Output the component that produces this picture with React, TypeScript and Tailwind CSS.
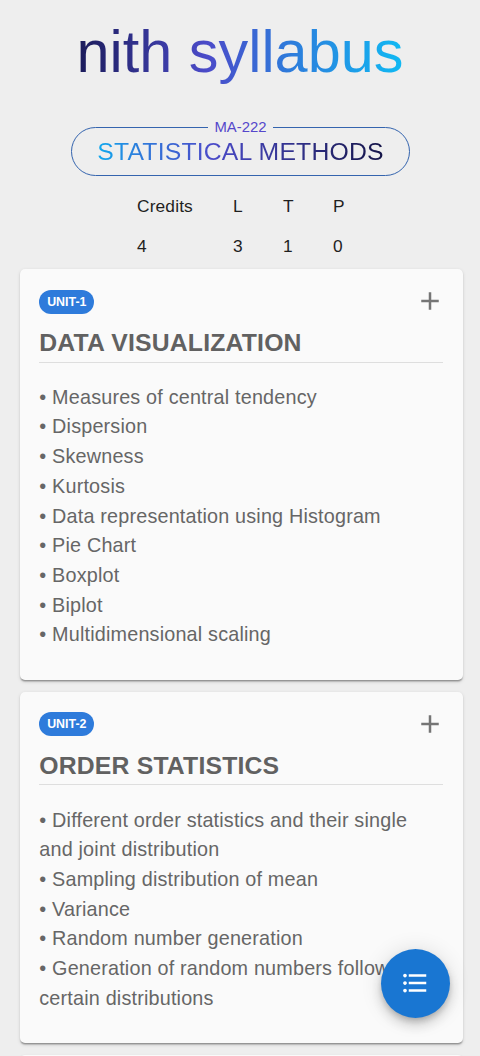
import React from "react";

type Unit = { label: string; title: string; topics: string[] };

const units: Unit[] = [
  {
    label: "UNIT-1",
    title: "DATA VISUALIZATION",
    topics: [
      "Measures of central tendency",
      "Dispersion",
      "Skewness",
      "Kurtosis",
      "Data representation using Histogram",
      "Pie Chart",
      "Boxplot",
      "Biplot",
      "Multidimensional scaling",
    ],
  },
  {
    label: "UNIT-2",
    title: "ORDER STATISTICS",
    topics: [
      "Different order statistics and their single and joint distribution",
      "Sampling distribution of mean",
      "Variance",
      "Random number generation",
      "Generation of random numbers following certain distributions",
    ],
  },
];

const credits = [
  ["Credits", "4", "w-[96px]"],
  ["L", "3", "w-[50px]"],
  ["T", "1", "w-[50px]"],
  ["P", "0", "w-[20px]"],
];

function UnitCard({ unit }: { unit: Unit }) {
  return (
    <section className="rounded-[5px] bg-[#fafafa] pr-[20px] pl-[19.3px] pt-[20px] pb-[29.7px] shadow-[0_2px_1px_-1.2px_rgba(0,0,0,0.2),0_1.2px_1.2px_0_rgba(0,0,0,0.14),0_1.2px_3.7px_0_rgba(0,0,0,0.12)]">
      <div className="flex h-[25px] items-center justify-between">
        <span className="flex h-[24px] w-[55px] items-center justify-center rounded-full bg-[#2e7bdb] pt-px text-[12.4px] font-bold text-white">
          {unit.label}
        </span>
        <svg viewBox="0 0 24 24" className="mt-[-1px] mr-[-2px] h-[30px] w-[30px] fill-[#757575]">
          <path d="M19 13h-6v6h-2v-6H5v-2h6V5h2v6h6v2z" />
        </svg>
      </div>
      <h2 className="mt-[8px] h-[40.6px] border-b border-[#dedede] text-[24.75px] leading-[41px] font-bold tracking-[0.19px] whitespace-nowrap text-[#616161]">
        {unit.title}
      </h2>
      <ul className="mt-[20.2px] text-[19.8px] leading-[29.7px] tracking-[0.186px] text-[#666666]">
        {unit.topics.map((topic) => (
          <li key={topic}>{`• ${topic}`}</li>
        ))}
      </ul>
    </section>
  );
}

export default function App() {
  return (
    <div className="h-[1056px] overflow-hidden bg-[#eeeeee] font-['Liberation_Sans',Arial,sans-serif]">
      <header className="flex h-[127px] justify-center pt-[17px]">
        <h1 className="h-[70px] bg-[linear-gradient(90deg,#1b1b5a,#4b4bc9_40%,#2e7bdb_65%,#10b9f3)] bg-clip-text text-[59.4px] leading-[70px] whitespace-nowrap text-transparent">
          nith syllabus
        </h1>
      </header>
      <fieldset className="relative ml-[71px] flex h-[49px] w-[339px] items-center justify-center rounded-full border border-[#3464ae]">
        <span className="absolute -top-[11px] left-[136px] bg-[#eeeeee] px-[6.5px] text-[14.85px] leading-[20px] text-[#5547cb]">
          MA-222
        </span>
        <span className="mt-px bg-[linear-gradient(90deg,#10a9ee,#2e7bdb_15%,#4b4bc9_40%,#151548)] bg-clip-text text-[24.75px] leading-[32px] tracking-[0.186px] whitespace-nowrap text-transparent">
          STATISTICAL METHODS
        </span>
      </fieldset>
      <div className="ml-[137px] flex h-[93px] pt-[10px] text-[17.33px] leading-[40px] tracking-[0.15px] text-[#1f1f1f]">
        {credits.map(([name, value, width]) => (
          <div key={name} className={width}>
            <div>{name}</div>
            <div>{value}</div>
          </div>
        ))}
      </div>
      <main className="ml-[20px] flex w-[443px] flex-col gap-[12px]">
        {units.map((unit) => (
          <UnitCard key={unit.label} unit={unit} />
        ))}
        <section className="h-[40px] rounded-[5px] bg-[#fafafa] shadow-sm" />
      </main>
      <button
        aria-label="Contents"
        className="fixed top-[949px] left-[381px] flex h-[69px] w-[69px] items-center justify-center rounded-full bg-[#1976d2] shadow-[0_3.7px_6.2px_-1.2px_rgba(0,0,0,0.2),0_7.4px_12.4px_0_rgba(0,0,0,0.14),0_1.2px_22px_0_rgba(0,0,0,0.12)]"
      >
        <svg viewBox="0 0 24 24" className="mr-[1px] mb-[1px] h-[30px] w-[30px] fill-white">
          <path d="M4 10.5c-.83 0-1.5.67-1.5 1.5s.67 1.5 1.5 1.5 1.5-.67 1.5-1.5-.67-1.5-1.5-1.5zm0-6c-.83 0-1.5.67-1.5 1.5S3.17 7.5 4 7.5 5.5 6.83 5.5 6 4.83 4.5 4 4.5zm0 12c-.83 0-1.5.68-1.5 1.5s.68 1.5 1.5 1.5 1.5-.68 1.5-1.5-.67-1.5-1.5-1.5zM7 19h14v-2H7v2zm0-6h14v-2H7v2zm0-8v2h14V5H7z" />
        </svg>
      </button>
    </div>
  );
}
